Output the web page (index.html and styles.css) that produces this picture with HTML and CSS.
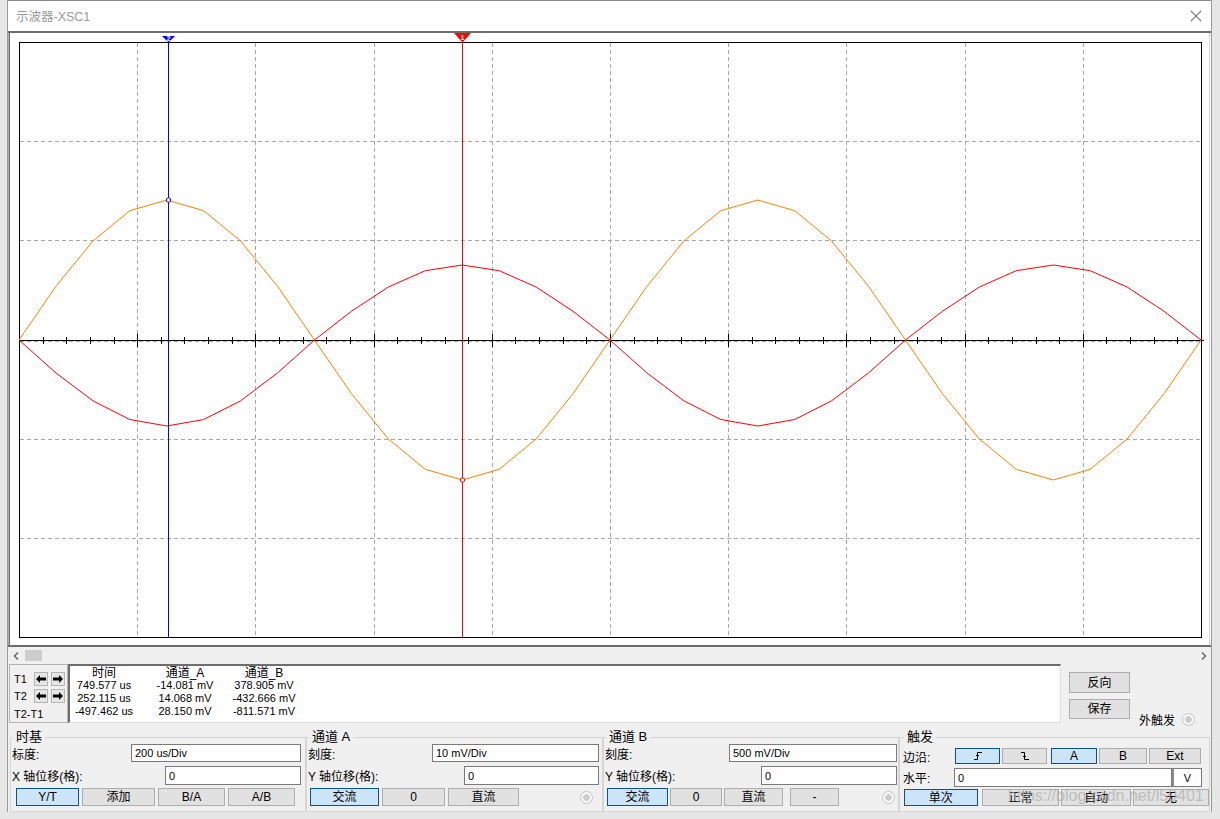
FILE: index.html
```html
<!DOCTYPE html>
<html lang="zh-CN">
  <head>
    <meta charset="UTF-8" />
    <title>示波器-XSC1</title>
    <link rel="stylesheet" href="styles.css">
  </head>
  <body>
    <div class="window">
      <div class="titlebar">
        <span class="title">示波器-XSC1</span>
        <svg class="close" width="12" height="12" viewBox="0 0 12 12">
          <path d="M1 1L11 11M11 1L1 11" stroke="#7d7d7d" stroke-width="1.1" fill="none"/>
        </svg>
      </div>

      <!-- scope screen, drawn in page coordinates -->
      <svg class="screen" width="1203" height="612" viewBox="8 33 1203 612">
        <rect x="8" y="33" width="1203" height="612" fill="#fff"/>
        <path d="M8.5 33V645" stroke="#b0b0b0"/>
        <path d="M9.5 33V645" stroke="#6d6d6d"/>
        <path d="M1209.5 33V645" stroke="#d4d4d4"/>

        <g stroke="#a6a6a6" stroke-dasharray="4 3" fill="none">
          <path d="M137.5 43V637M255.5 43V637M374.5 43V637M492.5 43V637M610.5 43V637M728.5 43V637M846.5 43V637M965.5 43V637M1083.5 43V637"/>
          <path d="M20 141.5H1201M20 240.5H1201M20 341.5H1201M20 439.5H1201M20 538.5H1201"/>
        </g>

        <rect x="19.5" y="42.5" width="1182" height="595" fill="none" stroke="#000"/>
        <path d="M19 340.5H1204" stroke="#000"/>
        <path stroke="#000" fill="none" d="M43.5 337V344M66.5 337V344M90.5 337V344M114.5 337V344M161.5 337V344M184.5 337V344M208.5 337V344M232.5 337V344M279.5 337V344M303.5 337V344M326.5 337V344M350.5 337V344M397.5 337V344M421.5 337V344M445.5 337V344M468.5 337V344M515.5 337V344M539.5 337V344M563.5 337V344M586.5 337V344M634.5 337V344M657.5 337V344M681.5 337V344M705.5 337V344M752.5 337V344M775.5 337V344M799.5 337V344M823.5 337V344M870.5 337V344M894.5 337V344M917.5 337V344M941.5 337V344M988.5 337V344M1012.5 337V344M1036.5 337V344M1059.5 337V344M1106.5 337V344M1130.5 337V344M1154.5 337V344M1177.5 337V344"/>
        <path stroke="#000" fill="none" d="M137.5 334V347M255.5 334V347M374.5 334V347M492.5 334V347M610.5 334V347M728.5 334V347M846.5 334V347M965.5 334V347M1083.5 334V347M1201.5 334V347"/>

        <polyline fill="none" stroke="#ff8000" points="19,340 55.9,286.4 92.9,241 129.8,210.7 166.8,200 203.7,210.7 240.6,241 277.6,286.4 314.5,340 351.4,393.6 388.4,439 425.3,469.3 462.3,480 499.2,469.3 536.1,439 573.1,393.6 610,340 646.9,286.4 683.9,241 720.8,210.7 757.8,200 794.7,210.7 831.6,241 868.6,286.4 905.5,340 942.4,393.6 979.4,439 1016.3,469.3 1053.3,480 1090.2,469.3 1127.1,439 1164.1,393.6 1201,340"/>
        <polyline fill="none" stroke="#ff0000" points="19,340 55.9,372.9 92.9,400.8 129.8,419.5 166.8,426 203.7,419.5 240.6,400.8 277.6,372.9 314.5,340 351.4,311.3 388.4,287 425.3,270.7 462.3,265 499.2,270.7 536.1,287 573.1,311.3 610,340 646.9,372.9 683.9,400.8 720.8,419.5 757.8,426 794.7,419.5 831.6,400.8 868.6,372.9 905.5,340 942.4,311.3 979.4,287 1016.3,270.7 1053.3,265 1090.2,270.7 1127.1,287 1164.1,311.3 1201,340"/>

        <!-- cursors -->
        <path d="M168.5 42V637" stroke="#0000ff"/>
        <path d="M462.5 42V637" stroke="#ff0000"/>
        <polygon points="162,36 175,36 168.5,42.5" fill="#0000ff"/>
        <text x="168.5" y="40.5" class="cursor-num">2</text>
        <polygon points="454,33 471,33 462.5,42.5" fill="#ff0000"/>
        <text x="462.5" y="39.5" class="cursor-num">1</text>
        <circle cx="168.5" cy="200" r="2.2" fill="#fff" stroke="#0000ff"/>
        <circle cx="462.5" cy="480" r="2.2" fill="#fff" stroke="#ff0000"/>
      </svg>

      <div class="hscroll">
        <svg class="chev-left" width="6" height="8" viewBox="0 0 6 8">
          <path d="M5 0.5L1.5 4L5 7.5" stroke="#606060" stroke-width="1.4" fill="none"/>
        </svg>
        <div class="thumb"></div>
        <svg class="chev-right" width="6" height="8" viewBox="0 0 6 8">
          <path d="M1 0.5L4.5 4L1 7.5" stroke="#606060" stroke-width="1.4" fill="none"/>
        </svg>
      </div>

      <div class="readout">
        <div class="cursors">
          <div class="cursor-row">
            <span class="t-label">T1</span>
            <span class="arrow-btn"><svg width="10" height="8" viewBox="0 0 10 8"><polygon points="0,4 4,0 4,2.5 10,2.5 10,5.5 4,5.5 4,8"/></svg></span>
            <span class="arrow-btn"><svg width="10" height="8" viewBox="0 0 10 8"><polygon points="10,4 6,0 6,2.5 0,2.5 0,5.5 6,5.5 6,8"/></svg></span>
          </div>
          <div class="cursor-row">
            <span class="t-label">T2</span>
            <span class="arrow-btn"><svg width="10" height="8" viewBox="0 0 10 8"><polygon points="0,4 4,0 4,2.5 10,2.5 10,5.5 4,5.5 4,8"/></svg></span>
            <span class="arrow-btn"><svg width="10" height="8" viewBox="0 0 10 8"><polygon points="10,4 6,0 6,2.5 0,2.5 0,5.5 6,5.5 6,8"/></svg></span>
          </div>
          <div class="cursor-row diff">T2-T1</div>
        </div>

        <div class="data">
          <div class="head">时间</div>
          <div class="head">通道_A</div>
          <div class="head">通道_B</div>
          <div>749.577 us</div>
          <div>-14.081 mV</div>
          <div>378.905 mV</div>
          <div>252.115 us</div>
          <div>14.068 mV</div>
          <div>-432.666 mV</div>
          <div>-497.462 us</div>
          <div>28.150 mV</div>
          <div>-811.571 mV</div>
        </div>

        <div class="side-buttons">
          <button class="btn reverse">反向</button>
          <button class="btn save">保存</button>
        </div>

        <div class="ext">
          <span>外触发</span>
          <span class="radio"></span>
        </div>
      </div>

      <div class="controls">
        <fieldset class="group g-time">
          <legend>时基</legend>
          <div class="field first">
            <span>标度:</span>
            <input class="scale" value="200 us/Div">
          </div>
          <div class="field second">
            <span>X 轴位移(格):</span>
            <input class="offset" value="0">
          </div>
          <div class="btn-row">
            <button class="btn on">Y/T</button>
            <button class="btn">添加</button>
            <button class="btn">B/A</button>
            <button class="btn">A/B</button>
          </div>
        </fieldset>

        <fieldset class="group g-a">
          <legend>通道 A</legend>
          <div class="field first">
            <span>刻度:</span>
            <input class="scale" value="10 mV/Div">
          </div>
          <div class="field second">
            <span>Y 轴位移(格):</span>
            <input class="offset" value="0">
          </div>
          <div class="btn-row">
            <button class="btn on">交流</button>
            <button class="btn">0</button>
            <button class="btn">直流</button>
            <span class="radio"></span>
          </div>
        </fieldset>

        <fieldset class="group g-b">
          <legend>通道 B</legend>
          <div class="field first">
            <span>刻度:</span>
            <input class="scale" value="500 mV/Div">
          </div>
          <div class="field second">
            <span>Y 轴位移(格):</span>
            <input class="offset" value="0">
          </div>
          <div class="btn-row">
            <button class="btn on">交流</button>
            <button class="btn">0</button>
            <button class="btn">直流</button>
            <button class="btn minus">-</button>
            <span class="radio"></span>
          </div>
        </fieldset>

        <fieldset class="group g-trig">
          <legend>触发</legend>
          <div class="trig-row edge">
            <span class="row-label">边沿:</span>
            <button class="btn on">
              <svg width="10" height="10" viewBox="0 0 10 10"><path d="M1 8.5H4.5V1.5H9M3 5L4.5 3.5L6 5" stroke="#000" fill="none"/></svg>
            </button>
            <button class="btn">
              <svg width="10" height="10" viewBox="0 0 10 10"><path d="M1 1.5H4.5V8.5H9M3 5L4.5 6.5L6 5" stroke="#000" fill="none"/></svg>
            </button>
            <button class="btn on src">A</button>
            <button class="btn">B</button>
            <button class="btn">Ext</button>
          </div>
          <div class="trig-row level">
            <span class="row-label">水平:</span>
            <input class="level-input" value="0">
            <span class="unit">V</span>
          </div>
          <div class="trig-row mode">
            <button class="btn on">单次</button>
            <button class="btn">正常</button>
            <button class="btn">自动</button>
            <button class="btn">无</button>
          </div>
        </fieldset>
      </div>

      <div class="watermark">https://blog.csdn.net/l50401</div>
    </div>
  </body>
</html>
```

FILE: styles.css
```css
* {
  margin: 0;
  padding: 0;
  box-sizing: border-box;
}

body {
  width: 1220px;
  height: 819px;
  overflow: hidden;
  background-color: #e6e6e6;
  font-family: "Liberation Sans", "Noto Sans CJK SC", sans-serif;
  font-size: 12px;
  color: #000;
}

.window {
  position: relative;
  margin-left: 7px;
  width: 1205px;
  height: 812px;
  background-color: #f0f0f0;
  border-left: 1px solid #9a9a9a;
  border-right: 1px solid #9a9a9a;
}

/* title bar */
.titlebar {
  height: 33px;
  background-color: #fff;
  border-top: 1px solid #8a8a8a;
  border-bottom: 2px solid #6d6d6d;
  display: flex;
  align-items: center;
  justify-content: space-between;
  padding: 0 9px 1px 8px;
}

.title {
  font-size: 12.5px;
  color: #999;
}

/* screen */
.screen {
  display: block;
}

.cursor-num {
  font-family: "Liberation Sans", sans-serif;
  font-size: 7px;
  font-weight: bold;
  fill: #fff;
  text-anchor: middle;
}

.hscroll {
  height: 19px;
  border-top: 2px solid #6d6d6d;
  display: flex;
  align-items: center;
}

.chev-left {
  margin-left: 5px;
}

.thumb {
  margin-left: 6px;
  width: 17px;
  height: 11px;
  background-color: #cdcdcd;
}

.chev-right {
  margin-left: auto;
  margin-right: 4px;
}

/* cursor readout */
.readout {
  height: 59px;
  display: flex;
}

.cursors {
  margin-left: 1px;
  width: 59px;
  height: 59px;
  border: 1px solid #b4b4b4;
  padding: 6px 0 0 4px;
  font-size: 11px;
}

.cursor-row {
  display: flex;
  align-items: center;
  gap: 3px;
  height: 16px;
  margin-bottom: 1px;
}

.cursor-row.diff {
  margin-top: 2px;
}

.t-label {
  width: 17px;
}

.arrow-btn {
  width: 14px;
  height: 14px;
  border: 1px solid #b5b5b5;
  background-color: #e6e6e6;
  display: flex;
  align-items: center;
  justify-content: center;
}

.data {
  width: 993px;
  height: 59px;
  background-color: #fff;
  border-top: 2px solid #6d6d6d;
  border-left: 2px solid #6d6d6d;
  border-right: 1px solid #dcdcdc;
  border-bottom: 1px solid #dcdcdc;
  display: grid;
  grid-template-columns: 68px 94px 64px;
  grid-auto-rows: 13px;
  align-content: start;
  text-align: center;
  font-size: 11px;
  line-height: 13px;
}

.data .head {
  font-size: 12px;
  line-height: 14px;
  height: 14px;
}

.side-buttons {
  margin-left: 8px;
  width: 61px;
  padding-top: 8px;
  display: flex;
  flex-direction: column;
  gap: 6px;
}

.side-buttons .reverse {
  height: 21px;
}

.side-buttons .save {
  height: 20px;
}

.ext {
  align-self: flex-end;
  margin: 0 0 -4px 9px;
  height: 16px;
  display: flex;
  align-items: center;
  gap: 7px;
}

.radio {
  width: 13px;
  height: 13px;
  border-radius: 50%;
  border: 1px solid #c6c6c6;
  background: radial-gradient(circle, #cbcbcb 0 3px, #f7f7f7 3.5px);
  flex-shrink: 0;
}

/* buttons */
.btn {
  height: 100%;
  border: 1px solid #adadad;
  background-color: #e1e1e1;
  font-family: inherit;
  font-size: 12px;
  line-height: 1;
  color: #000;
  display: flex;
  align-items: center;
  justify-content: center;
  padding: 0;
}

.btn.on {
  background-color: #cce4f7;
  border-color: #005499;
}

/* control groups */
.controls {
  height: 89px;
  padding: 7px 0 0 2px;
  display: flex;
}

.group {
  border: 1px solid #d5d5d5;
  padding: 0 4px 2px 1px;
  min-width: 0;
}

.group legend {
  font-size: 13px;
  line-height: 14px;
  padding: 0 3px;
  margin-left: 1px;
}

.field {
  display: flex;
  align-items: center;
  justify-content: space-between;
}

.field.first {
  height: 18px;
  margin-bottom: 4px;
}

.field.second {
  height: 19px;
  margin-bottom: 3px;
}

input {
  height: 100%;
  border: 1px solid #7a7a7a;
  background-color: #fff;
  font-family: "Liberation Sans", sans-serif;
  font-size: 11px;
  color: #000;
  padding-left: 3px;
  outline: none;
}

.btn-row {
  display: flex;
  align-items: center;
  height: 18px;
  gap: 3px;
}

.g-time {
  width: 296px;
}

.g-time .scale {
  width: 170px;
}

.g-time .offset {
  width: 136px;
}

.g-time .btn-row {
  margin-left: 4px;
}

.g-time .btn:nth-child(1) { width: 63px; }
.g-time .btn:nth-child(2) { width: 73px; }
.g-time .btn:nth-child(3) { width: 67px; }
.g-time .btn:nth-child(4) { width: 67px; }

.g-a {
  width: 297px;
  padding-right: 3px;
}

.g-a .scale {
  width: 167px;
}

.g-a .offset {
  width: 135px;
}

.g-a .btn-row {
  margin-left: 2px;
}

.g-a .btn:nth-child(1) { width: 69px; }
.g-a .btn:nth-child(2) { width: 63px; }
.g-a .btn:nth-child(3) { width: 71px; }

.g-a .radio {
  margin-left: auto;
  margin-right: 6px;
}

.g-b {
  width: 296px;
  padding-right: 1px;
}

.g-b .scale {
  width: 168px;
}

.g-b .offset {
  width: 136px;
}

.g-b .btn-row {
  margin-left: 2px;
  gap: 2px;
}

.g-b .btn:nth-child(1) { width: 61px; }
.g-b .btn:nth-child(2) { width: 52px; }
.g-b .btn:nth-child(3) { width: 59px; }

.g-b .btn.minus {
  width: 49px;
  margin-left: 5px;
}

.g-b .radio {
  margin-left: auto;
  margin-right: 2px;
}

.g-trig {
  width: 311px;
  padding-left: 3px;
  padding-right: 0;
}

.trig-row {
  display: flex;
  align-items: center;
}

.row-label {
  width: 52px;
  flex-shrink: 0;
}

.trig-row.edge {
  margin-top: 4px;
  height: 16px;
  margin-bottom: 4px;
  gap: 2px;
}

.trig-row.edge .row-label {
  margin-right: -2px;
}

.trig-row.edge .btn:nth-of-type(1) { width: 45px; }
.trig-row.edge .btn:nth-of-type(2) { width: 45px; }
.trig-row.edge .btn:nth-of-type(3) { width: 46px; margin-left: 2px; }
.trig-row.edge .btn:nth-of-type(4) { width: 48px; }
.trig-row.edge .btn:nth-of-type(5) { width: 52px; }

.trig-row.level {
  height: 19px;
  margin-bottom: 2px;
}

.trig-row.level .row-label {
  width: 51px;
}

.level-input {
  width: 218px;
}

.unit {
  width: 30px;
  height: 100%;
  border: 1px solid #7a7a7a;
  border-left: 2px solid #8a8a8a;
  background-color: #fff;
  font-size: 11px;
  display: flex;
  align-items: center;
  justify-content: center;
}

.trig-row.mode {
  height: 17px;
  margin-left: 1px;
  gap: 2px;
}

.trig-row.mode .btn:nth-child(1) { width: 74px; }
.trig-row.mode .btn:nth-child(2) { width: 78px; margin-left: 2px; }
.trig-row.mode .btn:nth-child(3) { width: 70px; }
.trig-row.mode .btn:nth-child(4) { width: 76px; }

/* blog watermark over the trigger buttons */
.watermark {
  position: absolute;
  left: 1000px;
  top: 787px;
  font-size: 16px;
  line-height: 18px;
  color: rgba(175, 175, 175, 0.75);
  white-space: nowrap;
  pointer-events: none;
}
```
